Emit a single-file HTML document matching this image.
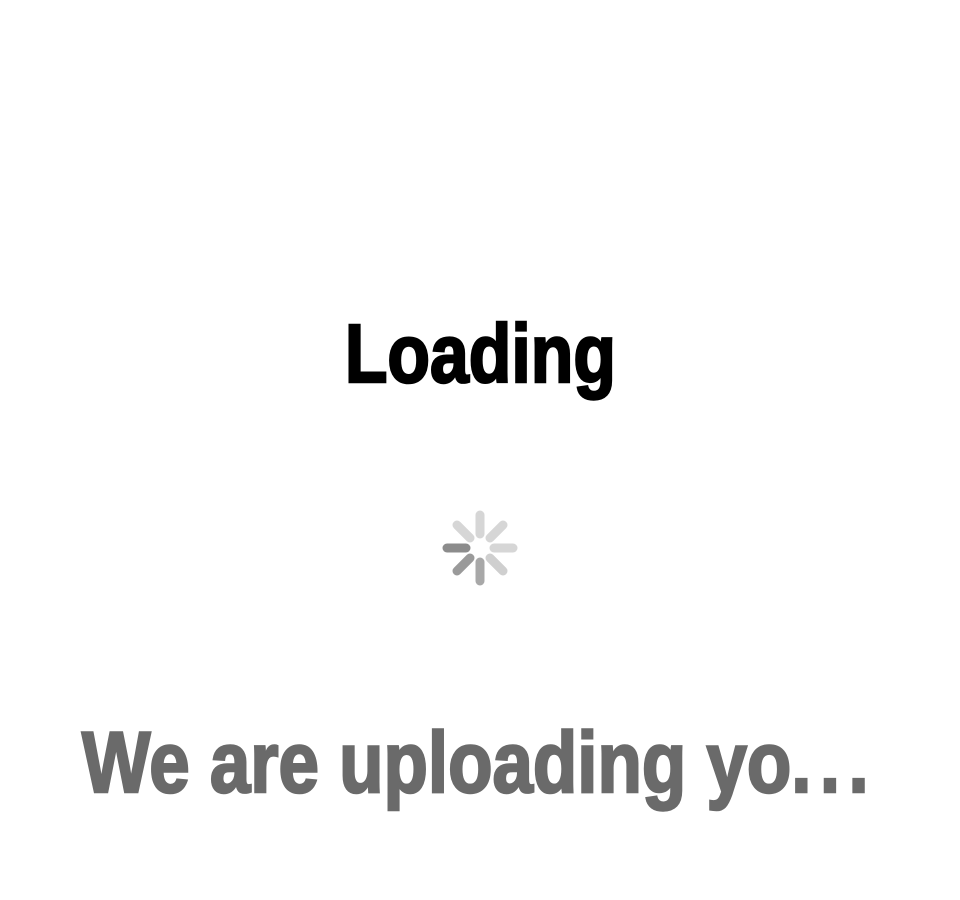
<!DOCTYPE html>
<html><head><meta charset="utf-8"><style>
html,body{margin:0;padding:0;width:960px;height:900px;background:#fff;overflow:hidden}
.t{position:absolute;left:0;width:960px;text-align:center;font-family:"Liberation Sans",sans-serif;font-weight:bold;line-height:1;white-space:nowrap}
.t span{display:inline-block;transform-origin:center}
</style></head><body>
<div class="t" style="top:312px;font-size:83px;color:#000"><span style="transform:scaleX(0.84);letter-spacing:0;-webkit-text-stroke:2.5px #000">Loading</span></div>
<svg style="position:absolute;left:430px;top:498px" width="100" height="100" viewBox="-50 -50 100 100">
<g stroke-width="9" stroke-linecap="round">
<line x1="0" y1="-14" x2="0" y2="-33" stroke="#d6d6d6"/>
<line x1="10" y1="-10" x2="23" y2="-23" stroke="#d6d6d6"/>
<line x1="14" y1="0" x2="33" y2="0" stroke="#d6d6d6"/>
<line x1="10" y1="10" x2="23" y2="23" stroke="#cfcfcf"/>
<line x1="0" y1="14" x2="0" y2="33" stroke="#a8a8a8"/>
<line x1="-10" y1="10" x2="-23" y2="23" stroke="#9a9a9a"/>
<line x1="-14" y1="0" x2="-33" y2="0" stroke="#8c8c8c"/>
<line x1="-10" y1="-10" x2="-23" y2="-23" stroke="#d6d6d6"/>
</g></svg>
<div class="t" style="top:720px;font-size:86px;color:#6a6a6a"><span style="transform:scaleX(0.845);letter-spacing:0;-webkit-text-stroke:2.5px #6a6a6a">We are uploading yo<span style="letter-spacing:10px">...</span></span></div>
</body></html>
